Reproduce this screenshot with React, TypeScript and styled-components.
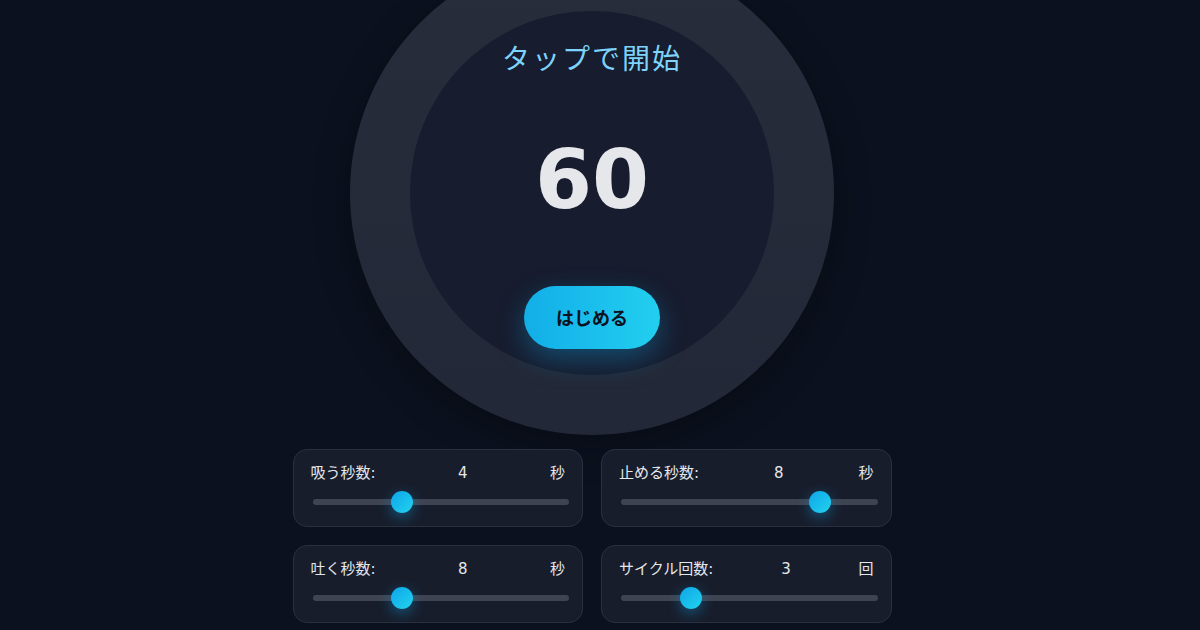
import React from "react";
import styled, { createGlobalStyle } from "styled-components";

const Global = createGlobalStyle`
  html, body {
    margin: 0;
    padding: 0;
    background: #0b111e;
    overflow: hidden;
  }
  body {
    font-family: "DejaVu Sans", "Noto Sans CJK JP", sans-serif;
    color: #e5e7eb;
  }
`;

const Page = styled.main`
  width: 1184px;
  height: 630px;
  display: flex;
  flex-direction: column;
  align-items: center;
  justify-content: center;
  padding-bottom: 56px;
  box-sizing: border-box;
`;

const Outer = styled.div`
  flex: none;
  width: 484px;
  height: 484px;
  border-radius: 50%;
  background: linear-gradient(180deg, #272d3b 0%, #222837 100%);
  box-shadow: 0 12px 36px rgba(0, 0, 0, 0.3);
  display: flex;
  align-items: center;
  justify-content: center;
`;

const Inner = styled.div`
  width: 364px;
  height: 364px;
  border-radius: 50%;
  background: #171c2e;
  display: flex;
  flex-direction: column;
  align-items: center;
  padding-top: 26px;
  box-sizing: border-box;
`;

const Title = styled.div`
  font-family: "Noto Sans CJK JP", sans-serif;
  font-size: 28px;
  line-height: 40px;
  letter-spacing: 2px;
  color: #7dd3fc;
`;

const Count = styled.div`
  margin-top: 55px;
  font-family: "DejaVu Sans", sans-serif;
  font-weight: 700;
  font-size: 82px;
  line-height: 96px;
  color: #e5e7eb;
`;

const StartButton = styled.button`
  margin-top: 58px;
  border: none;
  border-radius: 999px;
  padding: 20px 32px;
  background: linear-gradient(90deg, #12aee8 0%, #22cfef 100%);
  color: #0b111e;
  font-family: "Noto Sans CJK JP", sans-serif;
  font-weight: 700;
  font-size: 18px;
  line-height: 23px;
  box-shadow: 0 10px 28px rgba(14, 165, 233, 0.35);
  cursor: pointer;
`;

const Grid = styled.div`
  flex: none;
  margin-top: 14px;
  width: 599px;
  display: grid;
  grid-template-columns: 1fr 1fr;
  gap: 18px;
`;

const Card = styled.div`
  background: #181d2b;
  border: 1px solid #2a3040;
  border-radius: 14px;
  padding: 14px 17px 13px;
  display: flex;
  flex-direction: column;
  gap: 9px;
`;

const LabelRow = styled.div`
  display: flex;
  justify-content: space-between;
  align-items: center;
  font-size: 15px;
  line-height: 18px;
  color: #e5e7eb;
`;

const Slider = styled.div`
  position: relative;
  height: 22px;
  margin: 0 -4px 0 2px;
  display: flex;
  align-items: center;
`;

const Track = styled.div`
  width: 100%;
  height: 6px;
  border-radius: 3px;
  background: #3f4452;
`;

const Thumb = styled.div`
  position: absolute;
  top: 0;
  width: 22px;
  height: 22px;
  border-radius: 50%;
  background: linear-gradient(135deg, #0ea5e9 0%, #22d3ee 100%);
  box-shadow: 0 4px 14px rgba(14, 165, 233, 0.45);
`;

type Setting = { label: string; value: number; unit: string; min: number; max: number };

const settings: Setting[] = [
  { label: "吸う秒数:", value: 4, unit: "秒", min: 2, max: 8 },
  { label: "止める秒数:", value: 8, unit: "秒", min: 0, max: 10 },
  { label: "吐く秒数:", value: 8, unit: "秒", min: 4, max: 16 },
  { label: "サイクル回数:", value: 3, unit: "回", min: 1, max: 9 },
];

function SettingCard({ s }: { s: Setting }) {
  const pct = (s.value - s.min) / (s.max - s.min);
  return (
    <Card>
      <LabelRow>
        <span>{s.label}</span>
        <span>{s.value}</span>
        <span>{s.unit}</span>
      </LabelRow>
      <Slider>
        <Track />
        <Thumb style={{ left: `calc((100% - 22px) * ${pct})` }} />
      </Slider>
    </Card>
  );
}

export default function App() {
  return (
    <>
      <Global />
      <Page>
        <Outer>
          <Inner>
            <Title>タップで開始</Title>
            <Count>60</Count>
            <StartButton>はじめる</StartButton>
          </Inner>
        </Outer>
        <Grid>
          {settings.map((s) => (
            <SettingCard key={s.label} s={s} />
          ))}
        </Grid>
      </Page>
    </>
  );
}
